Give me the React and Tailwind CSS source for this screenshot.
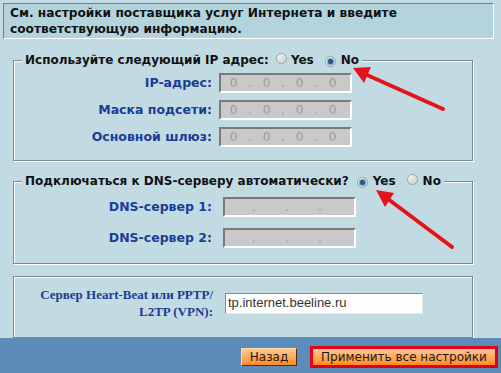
import React from 'react';

const Radio = ({ checked }) => (
  <span className="inline-flex h-[11px] w-[11px] shrink-0 items-center justify-center rounded-full border border-[#97a3a9] bg-linear-to-br from-[#f8f8f8] to-[#cdcdcd]">
    {checked && <span className="h-[5px] w-[5px] rounded-full bg-[#1d5a92] shadow-[0_0_0_1px_#6fa6d2]" />}
  </span>
);

const IpField = ({ value, className }) => (
  <div className={`flex h-[20px] w-[133px] items-center border-2 border-t-[#7a7a7a] border-l-[#7a7a7a] border-b-white border-r-white bg-[#c9c9c9] text-[12px] text-[#9b9b9b] ${className}`}>
    {[0, 1, 2, 3].map((i) => (
      <React.Fragment key={i}>
        {i > 0 && <span className="w-[8px] text-center">.</span>}
        <span className="w-[25px] text-center">{value}</span>
      </React.Fragment>
    ))}
  </div>
);

const Label = ({ children }) => (
  <div className="w-[198px] text-right text-[12.5px] font-bold text-[#1b3c96]">{children}</div>
);

const fieldsetCls =
  'ml-[13px] w-[460px] border border-[#7b8a90] shadow-[1px_1px_0_#ffffff,inset_1px_1px_0_#ffffff]';

export default function App() {
  return (
    <div className="relative flex h-[373px] w-[501px] flex-col overflow-hidden bg-[#c2dbe3] font-['DejaVu_Sans',sans-serif]">
      <div className="ml-[3px] mt-[3px] h-[36px] w-[491px] shrink-0 border border-t-[#6f7f86] border-l-[#6f7f86] border-b-white border-r-white bg-[#b4d4dd] pl-[6px] pt-[1px] text-[12.2px] font-bold leading-[16px] text-[#111]">
        См. настройки поставщика услуг Интернета и введите
        <br />
        соответствующую информацию.
      </div>

      <fieldset className={`${fieldsetCls} mt-[13px] shrink-0 pb-[13px]`}>
        <legend className="ml-[8px] bg-[#c2dbe3] px-[3px] text-[12px] font-bold leading-[16px] text-[#111]">
          <span className="inline-flex items-center">
            Используйте следующий IP адрес:
            <span className="ml-[7px]"><Radio /></span>
            <span className="ml-[4px]">Yes</span>
            <span className="ml-[11px]"><Radio checked /></span>
            <span className="ml-[5px]">No</span>
          </span>
        </legend>
        <div className="flex flex-col gap-[7px] pt-[5px]">
          <div className="flex items-center">
            <Label>IP-адрес:</Label>
            <IpField value="0" className="ml-[7px]" />
          </div>
          <div className="flex items-center">
            <Label>Маска подсети:</Label>
            <IpField value="0" className="ml-[7px]" />
          </div>
          <div className="flex items-center">
            <Label>Основной шлюз:</Label>
            <IpField value="0" className="ml-[7px]" />
          </div>
        </div>
      </fieldset>

      <fieldset className={`${fieldsetCls} mt-[12px] shrink-0 pb-[15px]`}>
        <legend className="ml-[8px] bg-[#c2dbe3] px-[3px] text-[12px] font-bold leading-[16px] text-[#111]">
          <span className="inline-flex items-center">
            Подключаться к DNS-серверу автоматически?
            <span className="ml-[8px]"><Radio checked /></span>
            <span className="ml-[5px]">Yes</span>
            <span className="ml-[11px]"><Radio /></span>
            <span className="ml-[5px]">No</span>
          </span>
        </legend>
        <div className="flex flex-col gap-[11px] pt-[8px]">
          <div className="flex items-center">
            <Label>DNS-сервер 1:</Label>
            <IpField value="" className="ml-[11px]" />
          </div>
          <div className="flex items-center">
            <Label>DNS-сервер 2:</Label>
            <IpField value="" className="ml-[11px]" />
          </div>
        </div>
      </fieldset>

      <fieldset className={`${fieldsetCls} mt-[12px] min-h-0 flex-1`}>
        <div className="flex items-center pt-[9px]">
          <div className="w-[199px] text-right font-['Liberation_Serif',serif] text-[13px] font-bold leading-[17px] text-[#1b3c96]">
            Сервер Heart-Beat или PPTP/
            <br />
            L2TP (VPN):
          </div>
          <div className="ml-[12px] flex h-[21px] w-[198px] items-center border border-t-[#8a8a8a] border-l-[#8a8a8a] border-b-[#e8e8e8] border-r-[#e8e8e8] bg-white pl-[2px] font-['Liberation_Sans',sans-serif] text-[13px] text-[#333]">
            tp.internet.beeline.ru
          </div>
        </div>
      </fieldset>

      <div className="flex h-[35px] shrink-0 items-center justify-end gap-[13px] bg-[#5d8bba] pr-[3px] pt-[2px]">
        <button className="flex h-[18px] w-[56px] items-center justify-center border border-t-[#ffd9a8] border-l-[#ffd9a8] border-b-[#4a2e0c] border-r-[#4a2e0c] bg-linear-to-b from-[#ffc890] to-[#ff8a12] text-[12px] text-[#1a1a1a]">
          Назад
        </button>
        <div className="border-[3px] border-[#e1001a]">
          <button className="flex h-[16px] w-[182px] items-center justify-center bg-linear-to-b from-[#ffc890] to-[#ff8a12] text-[12px] text-[#1a1a1a]">
            Применить все настройки
          </button>
        </div>
      </div>

      <svg className="pointer-events-none absolute left-0 top-0" width="501" height="373">
        <line x1="443" y1="109" x2="367" y2="75" stroke="#e5131c" strokeWidth="4" strokeLinecap="round" />
        <polygon points="353,68 371,67 364,83" fill="#e5131c" />
        <line x1="452" y1="247" x2="388" y2="199" stroke="#e5131c" strokeWidth="4" strokeLinecap="round" />
        <polygon points="376,190 394,193 385,207" fill="#e5131c" />
      </svg>
    </div>
  );
}
